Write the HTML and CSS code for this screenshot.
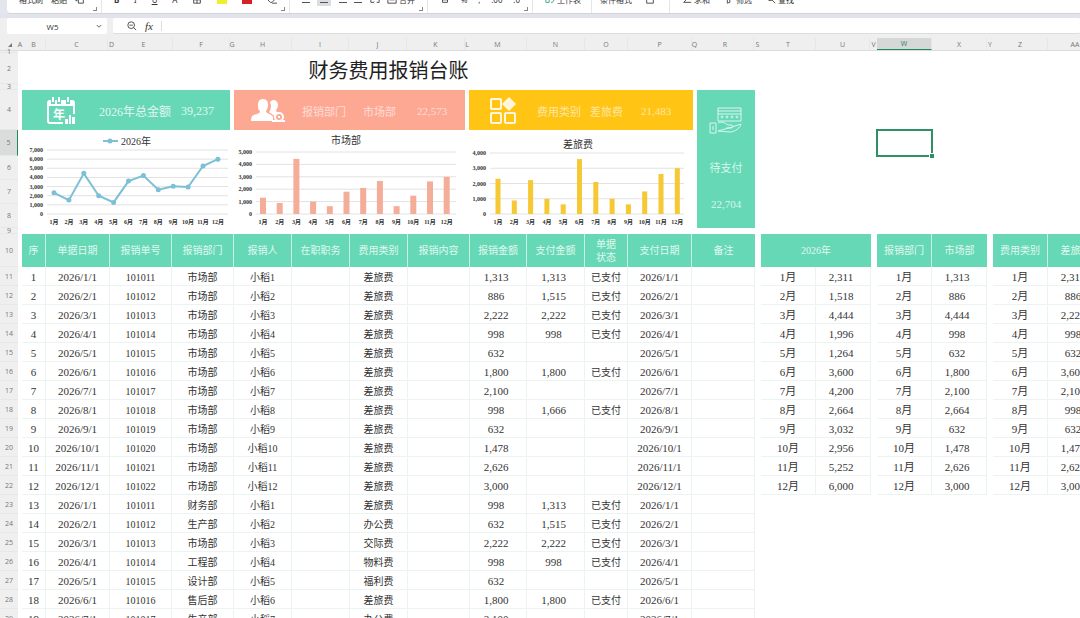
FILE: index.html
```html
<!DOCTYPE html>
<html lang="zh-CN">
  <head>
    <meta charset="UTF-8" />
    <meta name="viewport" content="width=device-width, initial-scale=1.0" />
    <title>财务费用报销台账</title>
    <link rel="stylesheet" href="styles.css" />
    <script src="script.js" defer></script>
  </head>
  <body>
    <header class="ribbon">
      <div class="group clipboard">
        <button type="button">格式刷</button>
        <button type="button">粘贴</button>
        <button type="button" aria-label="复制">
          <svg class="tool_icon" viewBox="0 0 12 12"><path d="M1 1h6v2M1 1v7h2M4 3h6v8H4z" /></svg>
        </button>
        <span class="corner"></span>
      </div>
      <div class="group font">
        <button type="button"><b>B</b></button>
        <button type="button"><i>I</i></button>
        <button type="button"><u>U</u></button>
        <button type="button">A</button>
        <button type="button" aria-label="边框">
          <svg class="tool_icon" viewBox="0 0 12 12"><path d="M2 2h8v9H2zM6 2v9M2 7h8" /></svg>
        </button>
        <button type="button" class="swatch yellow" aria-label="填充颜色"></button>
        <button type="button" class="swatch red" aria-label="字体颜色"></button>
        <button type="button" aria-label="清除">
          <svg class="tool_icon" viewBox="0 0 12 12"><path d="M1 7l5-5 4 4-4 4H4zM6 11h6" /></svg>
        </button>
        <span class="corner"></span>
      </div>
      <div class="group align">
        <button type="button" class="line" aria-label="左对齐"></button>
        <button type="button" class="line on" aria-label="居中"></button>
        <button type="button" class="line" aria-label="右对齐"></button>
        <button type="button" class="line" aria-label="两端对齐"></button>
        <button type="button" aria-label="换行">
          <svg class="tool_icon" viewBox="0 0 12 12"><path d="M1 3v7h3M11 3v7H8M4 10l1 1M4 10l1-1" /></svg>
        </button>
        <button type="button">
          <svg class="tool_icon" viewBox="0 0 12 12"><path d="M1 1h10v10H1zM3 7h6" /></svg>合并
        </button>
        <span class="corner"></span>
      </div>
      <div class="group number">
        <button type="button" aria-label="货币">
          <svg class="tool_icon" viewBox="0 0 12 12"><path d="M3 2h6v8H3zM3 7h6" /></svg>
        </button>
        <button type="button">%</button>
        <button type="button">,</button>
        <button type="button">.00</button>
        <button type="button">.0</button>
        <span class="corner"></span>
      </div>
      <div class="group sheet_tool">
        <button type="button">
          <svg class="tool_icon green" viewBox="0 0 12 12"><path d="M1 5h4v5H1zM7 3h4M7 10h2l2-3" /></svg>工作表
        </button>
      </div>
      <div class="group format">
        <button type="button">条件格式</button>
        <button type="button" aria-label="单元格">
          <svg class="tool_icon" viewBox="0 0 12 12"><path d="M2 1v10h8V1M0 6h12" /></svg>
        </button>
      </div>
      <div class="group edit">
        <button type="button">
          <svg class="tool_icon" viewBox="0 0 12 12"><path d="M9 1H3l4 4-5 5h9" /></svg>求和
        </button>
        <button type="button">
          <svg class="tool_icon" viewBox="0 0 12 12"><path d="M2 1h8L7 6v4l-3 1V6z" /></svg>筛选
        </button>
        <button type="button">
          <svg class="tool_icon" viewBox="0 0 12 12"><circle cx="5" cy="5" r="3" /><path d="M7 7l4 4" /></svg>查找
        </button>
      </div>
    </header>

    <div class="formula_bar">
      <button type="button" class="name_box">
        <span>W5</span>
        <svg viewBox="0 0 8 6"><path d="M1 1l3 3 3-3" /></svg>
      </button>
      <label class="formula">
        <svg viewBox="0 0 12 12">
          <circle cx="5" cy="5" r="4" />
          <path d="M3 5h4M8 8l3 3" />
        </svg>
        <i>fx</i>
        <input type="text" aria-label="编辑栏" />
      </label>
    </div>

    <div class="col_heads" id="colHeads"><span class="select_all"></span></div>

    <main class="workspace">
      <div class="row_heads" id="rowHeads"></div>
      <div class="sheet">
        <div class="selection"></div>
        <h1>财务费用报销台账</h1>

        <section class="dashboard">
          <div class="panel">
            <div class="card total">
              <svg viewBox="0 0 28 28">
                <path class="thick" d="M27 17V6a2 2 0 0 0-2-2H3a2 2 0 0 0-2 2v18a2 2 0 0 0 2 2h13" />
                <path class="solid" d="M1 4h26v5H1z" />
                <path class="gap" d="M6 1v6M12 1v6M21 1v6" />
                <path class="thick" d="M6 0v5M12 0v5M21 0v5" />
                <path class="solid" d="M18 22h3v5h-3zM22 18h2v9h-2zM25 20h3v7h-3z" />
                <text x="12" y="22">年</text>
              </svg>
              <span>2026年总金额</span>
              <span>39,237</span>
            </div>
            <svg class="chart" id="yearChart" viewBox="0 0 208 98"></svg>
          </div>

          <div class="panel">
            <div class="card dept">
              <svg viewBox="0 0 34 28">
                <path class="solid" d="M12 2c4 0 5 3 5 6s-1 5-2 6c0 3 6 3 7 6v4H0c0-5 2-6 6-7 3-1 3-2 3-3-2-1-2-3-2-6s1-6 5-6z" />
                <path class="solid" d="M22 3c3 0 5 2 5 5 0 2-1 4-2 5 0 2 2 3 4 3-3 1-5 3-5 6-1-5-4-5-6-7 1-1 2-3 2-6 0-2-1-3-1-4 1-1 2-2 3-2z" />
                <circle class="thick" cx="28" cy="20" r="4" />
                <path class="solid" d="M21 25h13v-2H21zM27 19h2v2h-2z" />
              </svg>
              <span>报销部门</span>
              <span>市场部</span>
              <span>22,573</span>
            </div>
            <svg class="chart" id="deptChart" viewBox="0 0 231 98"></svg>
          </div>

          <div class="panel">
            <div class="card type">
              <svg viewBox="0 0 28 28">
                <rect class="thick" x="2" y="2" width="10" height="10" rx="1" />
                <path class="solid" d="M20 0l7 7-7 7-7-7z" />
                <rect class="thick" x="2" y="16" width="10" height="10" rx="1" />
                <rect class="thick" x="16" y="16" width="10" height="10" rx="1" />
              </svg>
              <span>费用类别</span>
              <span>差旅费</span>
              <span>21,483</span>
            </div>
            <svg class="chart" id="typeChart" viewBox="0 0 224 98"></svg>
          </div>

          <div class="pay">
            <svg viewBox="0 0 34 28">
              <path d="M9 2h23v13H9zM9 5h23M9 8h23M1 17h6v10H1zM4 20v4" />
              <path d="M9 17c4-2 7 0 10 2h4c2 1 1 3-1 3h-5M23 21l9-3c0 3-6 8-11 8l-12-1z" />
              <circle cx="13" cy="11" r="1" />
              <circle cx="18" cy="11" r="1" />
              <circle cx="23" cy="11" r="1" />
              <circle cx="28" cy="11" r="1" />
            </svg>
            <span>待支付</span>
            <span>22,704</span>
          </div>
        </section>

        <section class="tables">
          <table class="ledger">
            <colgroup>
              <col class="w24" /><col class="w64" /><col class="w62" /><col class="w62" />
              <col class="w58" /><col class="w58" /><col class="w58" /><col class="w62" />
              <col class="w57" /><col class="w58" /><col class="w43" /><col class="w64" />
              <col class="w63" />
            </colgroup>
            <thead>
              <tr>
                <th>序</th>
                <th>单据日期</th>
                <th>报销单号</th>
                <th>报销部门</th>
                <th>报销人</th>
                <th>在职职务</th>
                <th>费用类别</th>
                <th>报销内容</th>
                <th>报销金额</th>
                <th>支付金额</th>
                <th>单据<br />状态</th>
                <th>支付日期</th>
                <th>备注</th>
              </tr>
            </thead>
            <tbody id="ledgerBody"></tbody>
          </table>

          <table class="summary">
            <thead>
              <tr><th colspan="2">2026年</th></tr>
            </thead>
            <tbody id="yearBody"></tbody>
          </table>

          <table class="summary">
            <thead>
              <tr><th>报销部门</th><th>市场部</th></tr>
            </thead>
            <tbody id="deptBody"></tbody>
          </table>

          <table class="summary">
            <thead>
              <tr><th>费用类别</th><th>差旅费</th></tr>
            </thead>
            <tbody id="typeBody"></tbody>
          </table>
        </section>
      </div>
    </main>
  </body>
</html>
```

FILE: styles.css
```css
* {
  margin: 0;
  padding: 0;
  box-sizing: border-box;
}

body {
  height: 100vh;
  display: flex;
  flex-direction: column;
  overflow: hidden;
  background-color: #e4e6ed;
  color: #333;
  font-family: 'Liberation Serif', 'Noto Sans CJK SC', serif;
  font-size: 10px;
}
button,
input {
  border: none;
  background: none;
  font: inherit;
  color: inherit;
}
svg {
  fill: none;
  stroke: currentColor;
}

/* ribbon */
.ribbon {
  flex: none;
  display: flex;
  height: 14px;
  margin-left: 7px;
  overflow: hidden;
  background-color: #fff;
  border-bottom: 1px solid #d3d4d9;
  border-bottom-left-radius: 4px;
  font-family: 'Noto Sans', 'Noto Sans CJK SC', sans-serif;
  font-size: 8px;
}
.group {
  position: relative;
  display: flex;
  justify-content: space-between;
  padding: 0 12px;
  border-right: 1px solid #e6e6e6;
}
.group button {
  display: flex;
  align-items: center;
  gap: 2px;
  height: 12px;
  margin-top: -7px;
  white-space: nowrap;
}
.clipboard {
  width: 95px;
}
.clipboard button:last-of-type {
  margin-right: 4px;
}
.font {
  width: 188px;
}
.align {
  width: 138px;
}
.number {
  width: 105px;
}
.sheet_tool {
  width: 59px;
}
.format {
  width: 78px;
  padding: 0 14px 0 8px;
}
.edit {
  width: 134px;
  padding-right: 10px;
  border-right: none;
}
.tool_icon {
  width: 10px;
  height: 10px;
}
.tool_icon.green {
  color: #2f9a6e;
}
.group .swatch {
  width: 10px;
  height: 4px;
  margin-top: 0;
}
.swatch.yellow {
  background-color: #eef02c;
}
.swatch.red {
  background-color: #d5202a;
}
.group .line {
  width: 8px;
  height: 3px;
  margin-top: 0;
  border-bottom: 1px solid #555;
}
.group .line.on {
  width: 14px;
  height: 6px;
  border: none;
  background: linear-gradient(#555, #555) center 2px / 8px 1px no-repeat #dcdde3;
}
.corner {
  position: absolute;
  right: 4px;
  bottom: 2px;
  width: 4px;
  height: 4px;
  border-right: 1px solid #888;
  border-bottom: 1px solid #888;
}

/* formula bar */
.formula_bar {
  flex: none;
  display: flex;
  gap: 6px;
  height: 24px;
  padding: 4px 0 4px 7px;
  background: linear-gradient(#e2e4eb 4px, #efefef 4px);
}
.name_box {
  display: flex;
  align-items: center;
  width: 100px;
  padding-right: 5px;
  background-color: #fff;
  border-radius: 2px;
  font-family: 'Open Sans', sans-serif;
  font-size: 8px;
}
.name_box span {
  flex: 1;
  padding-left: 2px;
}
.name_box svg {
  width: 6px;
  height: 5px;
}
.formula {
  flex: 1;
  display: flex;
  align-items: center;
  gap: 8px;
  padding-left: 14px;
  background-color: #fff;
  border-radius: 2px;
  border-bottom: 1px solid #ddd;
  font-size: 11px;
}
.formula svg {
  width: 10px;
  height: 10px;
}
.formula input {
  flex: 1;
  height: 10px;
  border-left: 1px solid #ddd;
  outline: none;
}

/* column and row headings */
.col_heads {
  flex: none;
  display: flex;
  height: 13px;
  background-color: #efefef;
  border-bottom: 1px solid #dcdcdc;
}
.col_heads span,
.row_heads span {
  flex: none;
  display: flex;
  align-items: center;
  justify-content: center;
  color: #777;
  font-family: 'Open Sans', sans-serif;
  font-size: 7px;
  line-height: 1;
}
.col_heads .wide {
  border-right: 1px solid #e7e7e7;
}
.col_heads .select_all {
  width: 18px;
}
.select_all::after {
  content: '';
  margin: 2px 0 0 2px;
  border-left: 4px solid transparent;
  border-bottom: 4px solid #777;
}
.col_heads .active {
  background-color: #d6d8d7;
  border-bottom: 1px solid #1f8a5b;
  color: #2d7d5a;
}
.workspace {
  flex: 1;
  display: flex;
  min-height: 0;
  background-color: #fff;
}
.row_heads {
  flex: none;
  width: 18px;
  background-color: #efefef;
}
.row_heads span {
  border-bottom: 1px solid #e7e7e7;
}
.row_heads .active {
  background-color: #dadcdb;
  border-right: 1px solid #1f8a5b;
}

/* sheet */
.sheet {
  flex: 1;
  position: relative;
  min-width: 0;
  padding: 2px 0 0 4px;
  overflow: hidden;
}
.selection {
  position: absolute;
  left: 858px;
  top: 78px;
  width: 57px;
  height: 28px;
  border: 2px solid #2f8f66;
}
.selection::after {
  content: '';
  position: absolute;
  right: -3px;
  bottom: -3px;
  width: 4px;
  height: 4px;
  background-color: #2f8f66;
  border: 1px solid #fff;
  border-width: 1px 0 0 1px;
}
h1 {
  width: 733px;
  height: 37px;
  color: #222;
  font-size: 20px;
  font-weight: 400;
  line-height: 36px;
  text-align: center;
}
.dashboard {
  display: grid;
  grid-template-columns: 208px 231px 224px 58px;
  gap: 4px;
  margin-bottom: 6px;
}
.card {
  display: grid;
  align-items: center;
  height: 40px;
  padding-top: 2px;
  color: #fff;
  font-size: 11px;
}
.card span {
  opacity: 0.6;
}
.card svg {
  height: 28px;
  justify-self: center;
}
.card .solid {
  fill: #fff;
  stroke: none;
}
.card .thick {
  stroke-width: 2px;
}
.card .gap {
  stroke: #66d8b5;
  stroke-width: 4px;
}
.card text {
  fill: #fff;
  stroke: none;
  font-size: 12px;
  font-weight: 700;
  text-anchor: middle;
}
.total {
  grid-template-columns: 77px 82px 1fr;
  background-color: #66d8b5;
  font-size: 12px;
}
.total span {
  opacity: 0.8;
}
.dept {
  grid-template-columns: 68px 61px 54px 1fr;
  background-color: #fda893;
}
.type {
  grid-template-columns: 68px 53px 51px 1fr;
  background-color: #ffc414;
}
.type svg {
  opacity: 0.85;
}
.pay {
  display: flex;
  flex-direction: column;
  align-items: center;
  gap: 26px;
  padding-top: 16px;
  background-color: #66d8b5;
  color: #d9f7ed;
  font-size: 11px;
  line-height: 16px;
}
.pay svg {
  width: 34px;
  height: 28px;
}
.pay span:last-child {
  margin-top: -6px;
}

/* charts */
.chart {
  display: block;
  width: 100%;
  color: #333;
}
.chart text {
  fill: #333;
  stroke: none;
}
.chart .grid {
  stroke: #e2e2e2;
}
.chart .caption {
  font-size: 10px;
}
.chart .tick {
  font-size: 6px;
  font-weight: 700;
}
.chart .middle {
  text-anchor: middle;
}
.chart .end {
  text-anchor: end;
}
.chart .trend {
  stroke: #7cc0d6;
  stroke-width: 2px;
}
.chart .dot {
  fill: #7cc0d6;
  stroke: none;
}
#deptChart .bar {
  fill: #f4ad98;
  stroke: none;
}
#typeChart .bar {
  fill: #f6c834;
  stroke: none;
}

/* tables */
.tables {
  display: flex;
  align-items: flex-start;
  gap: 6px;
}
table {
  flex: none;
  table-layout: fixed;
  border-collapse: separate;
  border-spacing: 0;
}
.ledger {
  width: 733px;
}
.summary {
  width: 110px;
  font-size: 11px;
}
th {
  height: 33px;
  background-color: #66d8b5;
  border-right: 1px solid #c9f1e4;
  color: #e0f8f0;
  font-size: 10px;
  font-weight: 400;
  line-height: 13px;
}
th:last-child {
  border-right: none;
}
td {
  height: 19px;
  padding-top: 3px;
  border-right: 1px solid #ebf4f1;
  border-bottom: 1px solid #ebf4f1;
  line-height: 14px;
  text-align: center;
  vertical-align: baseline;
  white-space: nowrap;
}
.num,
.date {
  font-size: 11px;
}
.num {
  padding-right: 4px;
}
.w24 {
  width: 24px;
}
.w43 {
  width: 43px;
}
.w57 {
  width: 57px;
}
.w58 {
  width: 58px;
}
.w62 {
  width: 62px;
}
.w63 {
  width: 63px;
}
.w64 {
  width: 64px;
}
```

FILE: script.js
```js
const months = Array.from({ length: 12 }, (_, i) => `${i + 1}月`);
const yearData = [2311, 1518, 4444, 1996, 1264, 3600, 4200, 2664, 3032, 2956, 5252, 6000];
const deptData = [1313, 886, 4444, 998, 632, 1800, 2100, 2664, 632, 1478, 2626, 3000];
const typeData = [2311, 886, 2222, 998, 632, 3600, 2100, 998, 632, 1478, 2626, 3000];

const colWidths = {
  A: 4, B: 24, C: 62, D: 7, E: 58, F: 57, G: 4, H: 58, I: 57, J: 58, K: 58, L: 4,
  M: 58, N: 58, O: 43, P: 64, Q: 5, R: 57, S: 7, T: 55, U: 54, V: 7, W: 55, X: 55,
  Y: 6, Z: 55, AA: 55,
};
const rowHeights = [2, 31, 6, 40, 26, 24, 24, 24, 6, 33];

// month, number, department, person, type, amount, paid
const ledger = [
  [1, 101011, '市场部', 1, '差旅费', 1313, 1313],
  [2, 101012, '市场部', 2, '差旅费', 886, 1515],
  [3, 101013, '市场部', 3, '差旅费', 2222, 2222],
  [4, 101014, '市场部', 4, '差旅费', 998, 998],
  [5, 101015, '市场部', 5, '差旅费', 632, 0],
  [6, 101016, '市场部', 6, '差旅费', 1800, 1800],
  [7, 101017, '市场部', 7, '差旅费', 2100, 0],
  [8, 101018, '市场部', 8, '差旅费', 998, 1666],
  [9, 101019, '市场部', 9, '差旅费', 632, 0],
  [10, 101020, '市场部', 10, '差旅费', 1478, 0],
  [11, 101021, '市场部', 11, '差旅费', 2626, 0],
  [12, 101022, '市场部', 12, '差旅费', 3000, 0],
  [1, 101011, '财务部', 1, '差旅费', 998, 1313],
  [2, 101012, '生产部', 2, '办公费', 632, 1515],
  [3, 101013, '市场部', 3, '交际费', 2222, 2222],
  [4, 101014, '工程部', 4, '物料费', 998, 998],
  [5, 101015, '设计部', 5, '福利费', 632, 0],
  [6, 101016, '售后部', 6, '差旅费', 1800, 1800],
  [7, 101017, '生产部', 7, '办公费', 2100, 0],
];

const money = (n) => (n ? n.toLocaleString('en-US') : '');
const byId = (id) => document.getElementById(id);

function drawHeads() {
  Object.entries(colWidths).forEach(([name, width]) => {
    const cls = (width > 10 ? 'wide' : '') + (name === 'W' ? ' active' : '');
    byId('colHeads').insertAdjacentHTML(
      'beforeend',
      `<span class="${cls}" style="width:${width}px">${name}</span>`
    );
  });
  for (let row = 1; row <= 29; row++) {
    const height = rowHeights[row - 1] || 19;
    byId('rowHeads').insertAdjacentHTML(
      'beforeend',
      `<span class="${row === 5 ? 'active' : ''}" style="height:${height}px">${row}</span>`
    );
  }
}

function drawLedger() {
  byId('ledgerBody').innerHTML = ledger
    .map(([month, no, dept, person, type, amount, paid], i) => {
      const date = `2026/${month}/1`;
      return `<tr>
        <td class="date">${i + 1}</td><td class="date">${date}</td><td>${no}</td>
        <td>${dept}</td><td>小稻${person}</td><td></td><td>${type}</td><td></td>
        <td class="num">${money(amount)}</td><td class="num">${money(paid)}</td>
        <td>${paid ? '已支付' : ''}</td><td class="date">${date}</td><td></td>
      </tr>`;
    })
    .join('');
}

function drawSummary(id, data) {
  byId(id).innerHTML = data
    .map((n, i) => `<tr><td>${months[i]}</td><td class="num">${money(n)}</td></tr>`)
    .join('');
}

// grid lines, value labels and month labels
function axes(o) {
  let out = '';
  for (let v = 0; v <= o.max; v += 1000) {
    const y = o.bottom - (v / o.max) * (o.bottom - o.top);
    out += `<line class="grid" x1="${o.left}" x2="${o.right}" y1="${y}" y2="${y}" />`;
    out += `<text class="tick end" x="${o.left - 4}" y="${y + 2}">${v.toLocaleString('en-US')}</text>`;
  }
  months.forEach((m, i) => {
    out += `<text class="tick middle" x="${o.first + i * o.step}" y="94">${m}</text>`;
  });
  return out;
}

function drawLine(id, data, o) {
  const points = data.map((n, i) => [
    o.first + i * o.step,
    o.bottom - (n / o.max) * (o.bottom - o.top),
  ]);
  byId(id).innerHTML =
    axes(o) +
    `<polyline class="trend" points="${points.join(' ')}" />` +
    points.map(([x, y]) => `<circle class="dot" cx="${x}" cy="${y}" r="2.5" />`).join('') +
    `<line class="trend" x1="81" x2="96" y1="11" y2="11" />
     <circle class="dot" cx="88" cy="11" r="2.5" />
     <text class="caption" x="99" y="15">2026年</text>`;
}

function drawBars(id, data, o) {
  const bars = data.map((n, i) => {
    const h = (n / o.max) * (o.bottom - o.top);
    const x = o.first + i * o.step - o.bar / 2;
    return `<rect class="bar" x="${x}" y="${o.bottom - h}" width="${o.bar}" height="${h}" />`;
  });
  byId(id).innerHTML =
    axes(o) +
    bars.join('') +
    `<text class="caption middle" x="${o.titleX}" y="${o.titleY}">${o.title}</text>`;
}

drawHeads();
drawLedger();
drawSummary('yearBody', yearData);
drawSummary('deptBody', deptData);
drawSummary('typeBody', typeData);
drawLine('yearChart', yearData, {
  max: 7000, top: 20, bottom: 84, left: 25, right: 206, first: 32, step: 14.9,
});
drawBars('deptChart', deptData, {
  max: 5000, top: 22, bottom: 84, left: 22, right: 222, first: 29, step: 16.7,
  bar: 6, title: '市场部', titleX: 112, titleY: 14,
});
drawBars('typeChart', typeData, {
  max: 4000, top: 23, bottom: 84, left: 21, right: 215, first: 29, step: 16.3,
  bar: 5, title: '差旅费', titleX: 109, titleY: 18,
});
```
